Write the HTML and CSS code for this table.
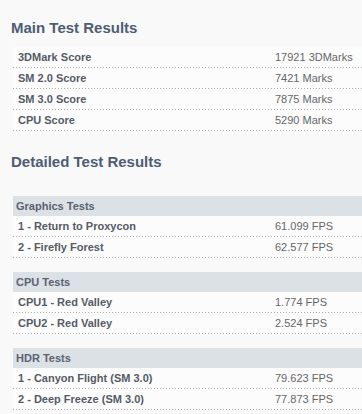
FILE: index.html
```html
<!DOCTYPE html>
<html>
<head>
<meta charset="utf-8">
<link rel="stylesheet" href="styles.css">
</head>
<body>
<div class="page">
  <h2 class="title title-main">Main Test Results</h2>
  <div class="table">
    <div class="row"><span class="label">3DMark Score</span><span class="value">17921 3DMarks</span></div>
    <div class="row"><span class="label">SM 2.0 Score</span><span class="value">7421 Marks</span></div>
    <div class="row"><span class="label">SM 3.0 Score</span><span class="value">7875 Marks</span></div>
    <div class="row"><span class="label">CPU Score</span><span class="value">5290 Marks</span></div>
  </div>

  <h2 class="title title-detail">Detailed Test Results</h2>
  <div class="table group">
    <div class="head">Graphics Tests</div>
    <div class="row"><span class="label">1 - Return to Proxycon</span><span class="value">61.099 FPS</span></div>
    <div class="row"><span class="label">2 - Firefly Forest</span><span class="value">62.577 FPS</span></div>
  </div>
  <div class="table group">
    <div class="head">CPU Tests</div>
    <div class="row"><span class="label">CPU1 - Red Valley</span><span class="value">1.774 FPS</span></div>
    <div class="row"><span class="label">CPU2 - Red Valley</span><span class="value">2.524 FPS</span></div>
  </div>
  <div class="table group">
    <div class="head">HDR Tests</div>
    <div class="row"><span class="label">1 - Canyon Flight (SM 3.0)</span><span class="value">79.623 FPS</span></div>
    <div class="row"><span class="label">2 - Deep Freeze (SM 3.0)</span><span class="value">77.873 FPS</span></div>
  </div>
</div>
</body>
</html>
```
FILE: styles.css
```css
html, body {
  margin: 0;
  padding: 0;
  background: #f9f9f9;
  font-family: "Liberation Sans", Arial, sans-serif;
}
.page {
  padding: 0 0 0 11px;
  overflow: hidden;
}
.title {
  margin: 0;
  font-size: 15px;
  font-weight: bold;
  color: #4e5d74;
  line-height: 18px;
}
.title-main {
  padding-top: 19px;
  margin-bottom: 10px;
}
.title-detail {
  margin-top: 22px;
  margin-bottom: 25px;
}
.table {
  margin-left: 2px;
}
.group {
  margin-bottom: 14px;
}
.head {
  height: 20px;
  line-height: 20px;
  background: #dce1e6;
  padding-left: 3px;
  font-size: 11px;
  font-weight: bold;
  color: #5a6270;
}
.row {
  display: flex;
  box-sizing: border-box;
  height: 21px;
  line-height: 21px;
  padding-bottom: 1px;
  background-color: #fcfcfc;
  background-image: linear-gradient(to right, #aaa 1px, transparent 1px);
  background-size: 3px 1px;
  background-repeat: repeat-x;
  background-position: 0 100%;
  font-size: 11px;
}
.label {
  box-sizing: border-box;
  width: 262px;
  padding-left: 5px;
  font-weight: bold;
  color: #555b66;
}
.value {
  color: #666;
}
```
